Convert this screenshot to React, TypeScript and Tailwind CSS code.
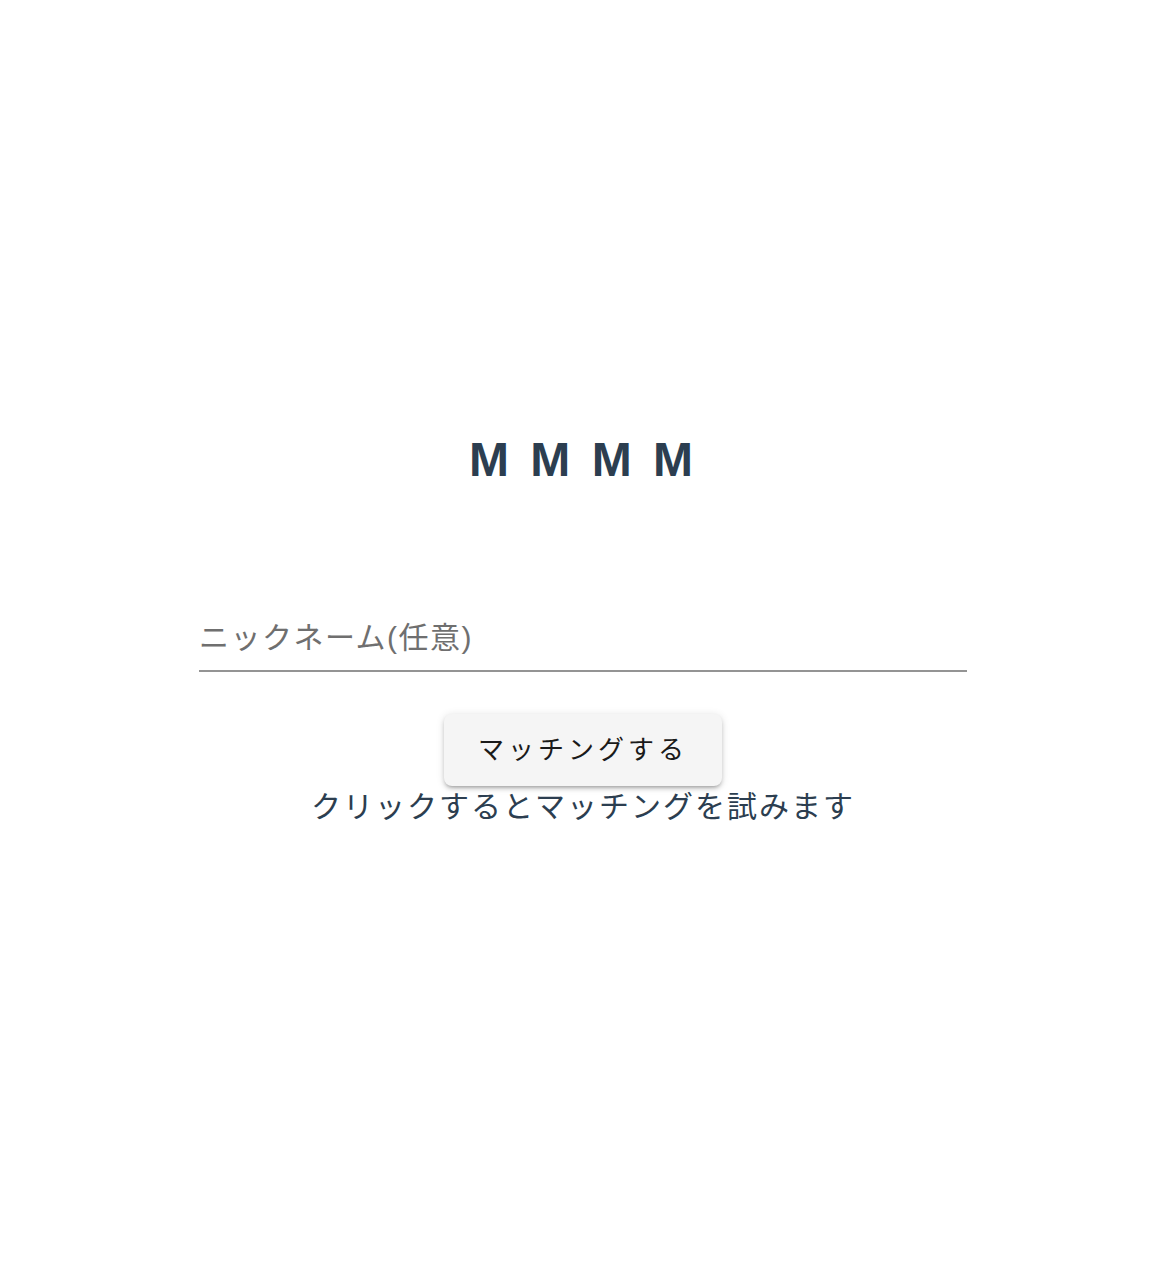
import { useState } from "react";

export default function App() {
  const [nickname, setNickname] = useState("");

  return (
    <div className="min-h-[1280px] w-full bg-white pr-[6px] font-['Liberation_Sans','Noto_Sans_CJK_JP',sans-serif] text-[#2c3e50]">
      <div className="flex flex-col items-center pt-[430px]">
        <h1 className="text-[48px] font-bold leading-[60px] tracking-[4px]">M M M M</h1>

        <div className="mt-[112px] w-[768px]">
          <input
            placeholder="ニックネーム(任意)"
            value={nickname}
            onChange={e => setNickname(e.target.value)}
            className="h-[70px] w-full border-b-2 border-[#949494] bg-transparent px-0 pt-[4px] pb-0 text-[30px] tracking-[1.5px] text-[#333] outline-none placeholder:text-[#6f6f6f]"
          />
        </div>

        <button className="mt-[42px] h-[72px] w-[278px] rounded-[8px] bg-[#f5f5f5] pb-[6px] font-['Noto_Sans_CJK_JP',sans-serif] text-[26px] tracking-[4px] text-[#1a1a1a] shadow-[0_3px_3px_-2px_rgba(0,0,0,0.2),0_3px_4px_0_rgba(0,0,0,0.14),0_1px_8px_0_rgba(0,0,0,0.12)]">
          マッチングする
        </button>

        <p className="font-['Noto_Sans_CJK_JP',sans-serif] text-[30px] leading-[36px] tracking-[2px]">
          クリックするとマッチングを試みます
        </p>
      </div>
    </div>
  );
}
